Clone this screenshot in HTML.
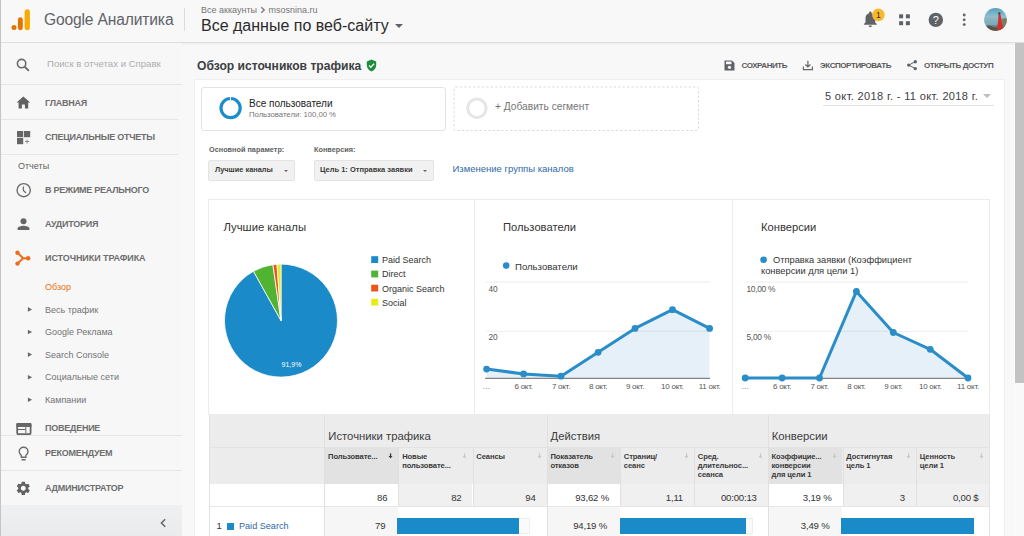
<!DOCTYPE html>
<html><head><meta charset="utf-8">
<style>
*{margin:0;padding:0;box-sizing:border-box}
html,body{width:1024px;height:536px;overflow:hidden}
body{background:#f8f8f8;font-family:"Liberation Sans",sans-serif;color:#3c4043;position:relative}
.a{position:absolute;white-space:nowrap}
.t{position:absolute;white-space:nowrap;line-height:1}
#hdr{position:absolute;left:0;top:0;width:1024px;height:43px;background:#f8f8f8;border-bottom:1px solid #dedede;box-shadow:0 1px 2px rgba(0,0,0,0.06)}
#lb{position:absolute;left:0;top:0;width:1px;height:536px;background:#c4c4c4}
#side{position:absolute;left:1px;top:43px;width:181px;height:493px;background:#f7f7f8}
.hr{position:absolute;height:1px;background:#e5e6e8}
.mi{position:absolute;left:45px;font-size:9px;font-weight:700;color:#6e6e6e;margin-top:0.4px;letter-spacing:-0.25px;line-height:1}
.si{position:absolute;left:45px;font-size:9px;color:#737373;line-height:1}
.tri{position:absolute;left:28px;width:0;height:0;border-left:4px solid #6a6a6a;border-top:2.3px solid transparent;border-bottom:2.3px solid transparent;margin-top:0.5px}
#panel{position:absolute;left:194px;top:79px;width:811px;height:460px;background:#fff;border:1px solid #efefef}
.tb{position:absolute;font-size:8px;font-weight:700;color:#585858;line-height:1;letter-spacing:-0.42px}
</style></head>
<body>
<div id="hdr"></div>
<div id="lb"></div>
<!-- logo -->
<svg class="a" style="left:0;top:0" width="40" height="40">
  <circle cx="14" cy="27.6" r="2.5" fill="#e37400"/>
  <rect x="17.9" y="17.2" width="4.9" height="13" rx="2.45" fill="#e37400"/>
  <rect x="24.6" y="9.3" width="5.3" height="20.9" rx="2.65" fill="#f9ab00"/>
</svg>
<div class="t" style="left:44px;top:12.3px;font-size:15.6px;letter-spacing:-0.15px;color:#5f6368">Google Аналитика</div>
<div class="a" style="left:184px;top:8px;width:1px;height:23px;background:#dadce0"></div>
<div class="t" style="left:201px;top:6px;font-size:9px;color:#757575">Все аккаунты</div>
<svg class="a" style="left:260px;top:6px" width="6" height="8" viewBox="0 0 6 8"><path d="M1.3 1.3 L4.2 4 L1.3 6.7" fill="none" stroke="#757575" stroke-width="1.3"/></svg>
<div class="t" style="left:268.6px;top:6.2px;font-size:9px;color:#757575">msosnina.ru</div>
<div class="t" style="left:201px;top:18.3px;font-size:16px;color:#2b2b2b">Все данные по веб-сайту</div>
<div class="a" style="left:395px;top:24px;width:0;height:0;border-left:4px solid transparent;border-right:4px solid transparent;border-top:4px solid #5f6368"></div>

<!-- header right icons -->
<svg class="a" style="left:860px;top:6px" width="160" height="30" viewBox="860 6 160 30">
  <path d="M870.3 27.2c.9 0 1.6-.7 1.6-1.6h-3.2c0 .9.7 1.6 1.6 1.6zm4.9-4.8v-4c0-2.5-1.3-4.5-3.6-5.1v-.6c0-.7-.6-1.2-1.3-1.2s-1.2.5-1.2 1.2v.6c-2.3.5-3.6 2.6-3.6 5.1v4l-1.6 1.6v.8h12.9v-.8l-1.6-1.6z" fill="#5f6368"/>
  <circle cx="878.4" cy="14.9" r="6.3" fill="#f9b92f"/>
  <text x="878.3" y="18" font-size="8.6" font-family="Liberation Sans" fill="#333" text-anchor="middle">1</text>
  <rect x="899.1" y="14.3" width="4" height="4" fill="#5f6368"/><rect x="905.9" y="14.3" width="4" height="4" fill="#5f6368"/>
  <rect x="899.1" y="21.2" width="4" height="4" fill="#5f6368"/><rect x="905.9" y="21.2" width="4" height="4" fill="#5f6368"/>
  <circle cx="935.8" cy="19.9" r="7.2" fill="#5f6368"/>
  <text x="935.8" y="23.7" font-size="11" font-family="Liberation Sans" fill="#fff" text-anchor="middle">?</text>
  <circle cx="964.2" cy="15" r="1.4" fill="#5f6368"/><circle cx="964.2" cy="19.8" r="1.4" fill="#5f6368"/><circle cx="964.2" cy="24.6" r="1.4" fill="#5f6368"/>
  <defs><clipPath id="av"><circle cx="995.5" cy="19.4" r="11.3"/></clipPath>
  <linearGradient id="sky" x1="0" y1="0" x2="0" y2="1"><stop offset="0" stop-color="#4d9ec0"/><stop offset="0.4" stop-color="#94bfcc"/><stop offset="0.7" stop-color="#5f98ad"/><stop offset="1" stop-color="#5d5348"/></linearGradient></defs>
  <g clip-path="url(#av)">
    <rect x="983" y="7" width="25" height="25" fill="url(#sky)"/>
    <path d="M983 19 L990 17 L999 19 L1008 18 L1008 25 L983 25Z" fill="#8fb4c0" opacity="0.6"/>
    <path d="M983 27 L989 25.5 L995 27.5 L1008 25 L1008 32 L983 32Z" fill="#5e5248"/>
    <path d="M1002 19 L1006 18 L1008 21 L1008 30 L1003 30Z" fill="#7d7a5c"/>
    <ellipse cx="999.4" cy="13.6" rx="1.2" ry="1.4" fill="#5a3a30"/>
    <path d="M998.4 15 L1000.6 15 L1001.6 20 L1003.4 29.5 L996.6 29.5 L998.2 21 Z" fill="#d2302a"/>
  </g>
</svg>

<!-- sidebar -->
<div id="side"></div>
<svg class="a" style="left:15px;top:57px" width="16" height="16" viewBox="0 0 16 16">
  <circle cx="6.6" cy="6.6" r="4.2" fill="none" stroke="#6b6b6b" stroke-width="1.6"/>
  <line x1="9.6" y1="9.6" x2="13.9" y2="13.9" stroke="#6b6b6b" stroke-width="1.9"/>
</svg>
<div class="t" style="left:47px;top:59.2px;width:114px;overflow:hidden;font-size:9.6px;color:#adadad">Поиск в отчетах и Справке</div>
<div class="hr" style="left:1px;top:84px;width:181px"></div>
<svg class="a" style="left:16px;top:96px" width="15" height="13" viewBox="0 0 15 13">
  <path d="M7.3 0.5 L0.6 6.6 H2.6 V12.5 H5.9 V8.5 H8.9 V12.5 H12.2 V6.6 H14.2 Z" fill="#616161"/>
</svg>
<div class="mi" style="top:98.5px">ГЛАВНАЯ</div>
<div class="hr" style="left:1px;top:119px;width:177px"></div>
<svg class="a" style="left:16px;top:130px" width="15" height="15" viewBox="0 0 15 15">
  <rect x="1" y="1" width="6.2" height="6.2" fill="#666"/><rect x="8" y="1" width="6.2" height="6.2" fill="#666"/>
  <rect x="1" y="8" width="6.2" height="6.2" fill="#666"/>
  <path d="M10.6 9.6h.9v1.5h1.5v.9h-1.5v1.5h-.9v-1.5h-1.5v-.9h1.5z" fill="#888"/>
</svg>
<div class="mi" style="top:133px">СПЕЦИАЛЬНЫЕ ОТЧЕТЫ</div>
<div class="hr" style="left:1px;top:154px;width:177px"></div>
<div class="t" style="left:18px;top:161.5px;font-size:9px;color:#616161">Отчеты</div>
<svg class="a" style="left:15px;top:182px" width="17" height="17" viewBox="0 0 17 17">
  <circle cx="8.7" cy="8.2" r="6.6" fill="none" stroke="#6b6b6b" stroke-width="1.4"/>
  <path d="M8.4 4.5 V8.5 L11 10.9" fill="none" stroke="#6b6b6b" stroke-width="1.3"/>
</svg>
<div class="mi" style="top:185.5px">В РЕЖИМЕ РЕАЛЬНОГО</div>
<svg class="a" style="left:16px;top:217px" width="15" height="15" viewBox="0 0 15 15">
  <circle cx="7.5" cy="4.3" r="3" fill="#666"/>
  <path d="M1.6 13 V11.6 C1.6 9.6 5.4 8.7 7.5 8.7 C9.6 8.7 13.4 9.6 13.4 11.6 V13 Z" fill="#666"/>
</svg>
<div class="mi" style="top:219.5px">АУДИТОРИЯ</div>
<svg class="a" style="left:15px;top:249px" width="17" height="17" viewBox="0 0 17 17">
  <path d="M2.5 3.7 L8.2 9.2 L2.5 14.6 M8.2 9.2 H13.1" fill="none" stroke="#ed6c1d" stroke-width="2"/>
  <circle cx="2.5" cy="3.7" r="2.2" fill="#ed6c1d"/><circle cx="2.5" cy="14.6" r="2.2" fill="#ed6c1d"/><circle cx="13.1" cy="9.2" r="2.3" fill="#ed6c1d"/>
</svg>
<div class="mi" style="top:254px;letter-spacing:-0.08px">ИСТОЧНИКИ ТРАФИКА</div>
<div class="si" style="top:282.5px;color:#e8710a">Обзор</div>
<svg class="a" style="left:0;top:0" width="40" height="420" viewBox="0 0 40 420"><path d="M27.9 307.1 L32.1 309.4 L27.9 311.7 Z" fill="#6a6a6a"/><path d="M27.9 329.7 L32.1 332.0 L27.9 334.3 Z" fill="#6a6a6a"/><path d="M27.9 352.3 L32.1 354.6 L27.9 356.9 Z" fill="#6a6a6a"/><path d="M27.9 374.9 L32.1 377.2 L27.9 379.5 Z" fill="#6a6a6a"/><path d="M27.9 397.5 L32.1 399.8 L27.9 402.1 Z" fill="#6a6a6a"/></svg>
<div class="si" style="top:305.5px">Весь трафик</div>
<div class="si" style="top:327.5px">Google Реклама</div>
<div class="si" style="top:351.3px">Search Console</div>
<div class="si" style="top:373.3px">Социальные сети</div>
<div class="si" style="top:395.5px">Кампании</div>
<svg class="a" style="left:16px;top:422px" width="16" height="13" viewBox="0 0 16 13">
  <rect x="1.2" y="1.8" width="13.4" height="10.4" rx="1.2" fill="none" stroke="#666" stroke-width="1.8"/>
  <rect x="0.3" y="0.9" width="15.2" height="4" rx="1" fill="#666"/>
  <line x1="1.5" y1="7.5" x2="9.8" y2="7.5" stroke="#666" stroke-width="1.1"/>
  <line x1="9.8" y1="4.5" x2="9.8" y2="11.5" stroke="#777" stroke-width="1.1"/>
</svg>
<div class="mi" style="top:423.7px">ПОВЕДЕНИЕ</div>
<div class="hr" style="left:1px;top:435px;width:181px"></div>
<svg class="a" style="left:17px;top:446px" width="13" height="16" viewBox="0 0 13 16">
  <path d="M6.6 1.3 C4.1 1.3 2.2 3.2 2.2 5.6 C2.2 7.2 3 8.5 4.3 9.3 V11.2 H8.9 V9.3 C10.2 8.5 11 7.2 11 5.6 C11 3.2 9.1 1.3 6.6 1.3Z" fill="none" stroke="#6b6b6b" stroke-width="1.4"/>
  <rect x="4.5" y="13" width="4.2" height="1.5" fill="#6b6b6b"/>
</svg>
<div class="mi" style="top:448.5px">РЕКОМЕНДУЕМ</div>
<div class="hr" style="left:1px;top:470px;width:181px"></div>
<svg class="a" style="left:14.6px;top:480.3px" width="16.6" height="16.6" viewBox="0 0 24 24">
  <path fill="#616161" d="M19.14 12.94c.04-.3.06-.61.06-.94 0-.32-.02-.64-.07-.94l2.03-1.58a.49.49 0 0 0 .12-.61l-1.92-3.32a.488.488 0 0 0-.59-.22l-2.39.96c-.5-.38-1.03-.7-1.62-.94l-.36-2.54a.484.484 0 0 0-.48-.41h-3.84c-.24 0-.43.17-.47.41l-.36 2.54c-.59.24-1.13.57-1.62.94l-2.39-.96c-.22-.08-.47 0-.59.22L2.74 8.87c-.12.21-.08.47.12.61l2.03 1.58c-.05.3-.09.63-.09.94s.02.64.07.94l-2.03 1.58a.49.49 0 0 0-.12.61l1.92 3.32c.12.22.37.29.59.22l2.39-.96c.5.38 1.03.7 1.62.94l.36 2.54c.05.24.24.41.48.41h3.84c.24 0 .44-.17.47-.41l.36-2.54c.59-.24 1.13-.56 1.62-.94l2.39.96c.22.08.47 0 .59-.22l1.92-3.32c.12-.22.07-.47-.12-.61l-2.01-1.58zM12 15.6c-1.98 0-3.6-1.62-3.6-3.6s1.62-3.6 3.6-3.6 3.6 1.62 3.6 3.6-1.62 3.6-3.6 3.6z"/>
</svg>
<div class="mi" style="top:484px">АДМИНИСТРАТОР</div>
<div class="a" style="left:1px;top:505px;width:181px;height:31px;background:linear-gradient(#eef0f2,#e9ebed)"></div>
<svg class="a" style="left:158px;top:517px" width="10" height="12" viewBox="0 0 10 12"><path d="M7.2 2.2 L3.4 6 L7.2 9.8" fill="none" stroke="#666" stroke-width="1.5"/></svg>

<!-- scrollbar -->
<div class="a" style="left:1014px;top:43px;width:10px;height:493px;background:#f9f9f9;border-left:1px solid #fdfdfd"></div>
<div class="a" style="left:1015px;top:43px;width:9px;height:340px;background:#c3c3c3"></div>

<!-- title & toolbar -->
<div class="t" style="left:197px;top:60px;font-size:12.1px;font-weight:700;color:#3c4043">Обзор источников трафика</div>
<svg class="a" style="left:366px;top:59px" width="11" height="13" viewBox="0 0 11 13">
  <path d="M5.5 0.5 L0.8 2.4 V6 C0.8 9 2.8 11.7 5.5 12.5 C8.2 11.7 10.2 9 10.2 6 V2.4 Z" fill="#1e8e3e"/>
  <path d="M3 6.4 L4.8 8.2 L8.1 4.8" fill="none" stroke="#fff" stroke-width="1.3"/>
</svg>
<svg class="a" style="left:724px;top:60px" width="11" height="11" viewBox="0 0 11 11">
  <path d="M0.5 0.5 H8 L10.5 3 V10.5 H0.5 Z" fill="#5f6368"/>
  <rect x="2" y="1.6" width="5.5" height="2.6" fill="#f8f8f8"/>
  <circle cx="5.5" cy="7.3" r="1.6" fill="#f8f8f8"/>
</svg>
<div class="tb" style="left:741.5px;top:61.5px">СОХРАНИТЬ</div>
<svg class="a" style="left:802px;top:60px" width="12" height="11" viewBox="0 0 12 11">
  <path d="M5.9 0.8 V6.8 M3.4 4.5 L5.9 7 L8.4 4.5 M1.4 6.5 V9.6 H10.4 V6.5" fill="none" stroke="#666" stroke-width="1.2"/>
</svg>
<div class="tb" style="left:820px;top:61.5px">ЭКСПОРТИРОВАТЬ</div>
<svg class="a" style="left:906px;top:59px" width="12" height="12" viewBox="0 0 12 12">
  <circle cx="9.3" cy="2.7" r="1.7" fill="#5f6368"/><circle cx="2.7" cy="6.1" r="1.7" fill="#5f6368"/><circle cx="9.3" cy="9.6" r="1.7" fill="#5f6368"/>
  <path d="M9.3 2.7 L2.7 6.1 L9.3 9.6" fill="none" stroke="#5f6368" stroke-width="1"/>
</svg>
<div class="tb" style="left:924px;top:61.5px">ОТКРЫТЬ ДОСТУП</div>

<!-- panel -->
<div id="panel"></div>
<div class="a" style="left:201px;top:87px;width:245px;height:44px;border:1px solid #e3e3e3;border-radius:3px;background:#fff"></div>
<svg class="a" style="left:218px;top:96px" width="26" height="26" viewBox="0 0 26 26">
  <circle cx="12.6" cy="12.1" r="9.6" fill="none" stroke="#1d8ccb" stroke-width="3.2"/>
  <rect x="12.1" y="0" width="0.9" height="5" fill="#fff"/>
</svg>
<div class="t" style="left:249px;top:98.8px;font-size:10px;color:#202124">Все пользователи</div>
<div class="t" style="left:249px;top:110.6px;font-size:7.7px;color:#757575">Пользователи: 100,00 %</div>
<svg class="a" style="left:453px;top:86px" width="247" height="46"><rect x="1" y="1" width="244.5" height="43.5" rx="1.5" fill="none" stroke="#d9d9d9" stroke-width="1" stroke-dasharray="2.2,2.2"/></svg>
<svg class="a" style="left:464px;top:96px" width="26" height="26" viewBox="0 0 26 26">
  <circle cx="12.9" cy="12.2" r="9.2" fill="none" stroke="#e6e6e6" stroke-width="3"/>
</svg>
<div class="t" style="left:495px;top:101.5px;font-size:10.2px;color:#757575">+ Добавить сегмент</div>
<div class="t" style="left:825px;top:91.3px;font-size:11px;letter-spacing:0.35px;color:#3c4043">5 окт. 2018 г. - 11 окт. 2018 г.</div>
<div class="a" style="left:983px;top:94px;width:0;height:0;border-left:4.5px solid transparent;border-right:4.5px solid transparent;border-top:4.5px solid #bdbdbd"></div>
<div class="a" style="left:823px;top:104.5px;width:171px;height:1px;background:#e0e0e0"></div>

<div class="tb" style="left:209px;top:145.5px;font-size:7.3px;letter-spacing:0;color:#616161">Основной параметр:</div>
<div class="a" style="left:208px;top:160px;width:87px;height:21px;background:#f1f1f1;border:1px solid #e3e3e3;border-radius:2px"></div>
<div class="tb" style="left:215px;top:166.4px;font-size:7.4px;letter-spacing:0;color:#3a3a3a">Лучшие каналы</div>
<div class="a" style="left:283.6px;top:169.8px;width:0;height:0;border-left:2.6px solid transparent;border-right:2.6px solid transparent;border-top:2.8px solid #666"></div>
<div class="tb" style="left:314px;top:145.5px;font-size:7.3px;letter-spacing:0;color:#616161">Конверсия:</div>
<div class="a" style="left:314px;top:160px;width:120px;height:21px;background:#f1f1f1;border:1px solid #e3e3e3;border-radius:2px"></div>
<div class="tb" style="left:320px;top:166.4px;font-size:7.5px;letter-spacing:0;color:#3a3a3a">Цель 1: Отправка заявки</div>
<div class="a" style="left:422.8px;top:169.8px;width:0;height:0;border-left:2.6px solid transparent;border-right:2.6px solid transparent;border-top:2.8px solid #666"></div>
<div class="t" style="left:452.5px;top:164.2px;font-size:9.5px;color:#2f69a8">Изменение группы каналов</div>

<!-- charts -->
<div class="a" style="left:208px;top:199px;width:782px;height:216px;border:1px solid #ececec;background:#fff"></div>
<div class="a" style="left:474px;top:200px;width:1px;height:214px;background:#ececec"></div>
<div class="a" style="left:732px;top:200px;width:1px;height:214px;background:#ececec"></div>
<div class="t" style="left:223.5px;top:222.3px;font-size:11.3px;color:#333">Лучшие каналы</div>
<div class="t" style="left:503px;top:222.2px;font-size:11.2px;color:#333">Пользователи</div>
<div class="t" style="left:761px;top:222.2px;font-size:11.2px;color:#333">Конверсии</div>

<svg class="a" style="left:0;top:0;overflow:visible" width="1024" height="536" viewBox="0 0 1024 536">
  <g stroke="#fff" stroke-width="0.8">
  <path d="M281,320.6 L281.00,264.10 A56.5,56.5 0 1 1 253.47,271.26 Z" fill="#1a8bc8"/>
  <path d="M281,320.6 L253.47,271.26 A56.5,56.5 0 0 1 272.91,264.68 Z" fill="#50b432"/>
  <path d="M281,320.6 L272.91,264.68 A56.5,56.5 0 0 1 277.01,264.24 Z" fill="#ed561b"/>
  <path d="M281,320.6 L277.01,264.24 A56.5,56.5 0 0 1 281.00,264.10 Z" fill="#e8ea1a"/>
  </g>
  <text x="291.5" y="366.5" font-size="7" font-family="Liberation Sans" fill="#fff" text-anchor="middle">91,9%</text>
  <!-- users chart -->
    <path d="M486.6,369.1 L523.6,373.9 L561,376.2 L598.1,352.3 L635,328.4 L672.5,309.7 L709.6,328.4 L709.6,378 L486.6,378 Z" fill="#e6f0f8"/>
  <line x1="486" y1="282" x2="710" y2="282" stroke="#000" stroke-opacity="0.07" stroke-width="1"/>
  <line x1="486" y1="331.3" x2="710" y2="331.3" stroke="#000" stroke-opacity="0.07" stroke-width="1"/>
  <line x1="485" y1="378.3" x2="710" y2="378.3" stroke="#666" stroke-width="1"/>
  <polyline points="486.6,369.1 523.6,373.9 561,376.2 598.1,352.3 635,328.4 672.5,309.7 709.6,328.4" fill="none" stroke="#2a8dc8" stroke-width="3" stroke-linejoin="round"/>
  <g fill="#2a8dc8">
  <circle cx="486.6" cy="369.1" r="3.4"/><circle cx="523.6" cy="373.9" r="3.4"/><circle cx="561" cy="376.2" r="3.4"/><circle cx="598.1" cy="352.3" r="3.4"/><circle cx="635" cy="328.4" r="3.4"/><circle cx="672.5" cy="309.7" r="3.4"/><circle cx="709.6" cy="328.4" r="3.4"/>
  </g>
  <circle cx="506.2" cy="265.6" r="3.3" fill="#2a8dc8"/>
  <!-- conversions chart -->
    <path d="M745.2,378 L782.1,378 L819.5,378 L856.4,291.4 L893.3,332.5 L930.2,349.3 L968,378 Z" fill="#e6f0f8"/>
  <line x1="745" y1="282" x2="968" y2="282" stroke="#000" stroke-opacity="0.07" stroke-width="1"/>
  <line x1="745" y1="331.3" x2="968" y2="331.3" stroke="#000" stroke-opacity="0.07" stroke-width="1"/>
  <line x1="744" y1="378.3" x2="969" y2="378.3" stroke="#666" stroke-width="1"/>
  <polyline points="745.2,378 782.1,378 819.5,378 856.4,291.4 893.3,332.5 930.2,349.3 968,378" fill="none" stroke="#2a8dc8" stroke-width="3" stroke-linejoin="round"/>
  <g fill="#2a8dc8">
  <circle cx="745.2" cy="378" r="3.4"/><circle cx="782.1" cy="378" r="3.4"/><circle cx="819.5" cy="378" r="3.4"/><circle cx="856.4" cy="291.4" r="3.4"/><circle cx="893.3" cy="332.5" r="3.4"/><circle cx="930.2" cy="349.3" r="3.4"/><circle cx="968" cy="378" r="3.4"/>
  </g>
  <circle cx="763.6" cy="259.8" r="3.3" fill="#2a8dc8"/>
  <!-- legend squares -->
  <rect x="371.2" y="256.2" width="7" height="6.8" fill="#1a8bc8"/>
  <rect x="371.2" y="270.6" width="7" height="6.8" fill="#50b432"/>
  <rect x="371.2" y="284.7" width="7" height="6.8" fill="#ed561b"/>
  <rect x="371.2" y="298.8" width="7" height="6.8" fill="#e8ea1a"/>
</svg>
<div class="t" style="left:382px;top:255.8px;font-size:9px;color:#333">Paid Search</div>
<div class="t" style="left:382px;top:270.3px;font-size:9px;color:#333">Direct</div>
<div class="t" style="left:382px;top:284.8px;font-size:9px;color:#333">Organic Search</div>
<div class="t" style="left:382px;top:298.8px;font-size:9px;color:#333">Social</div>
<div class="t" style="left:515px;top:261.5px;font-size:9.6px;color:#333">Пользователи</div>
<div class="t" style="left:773px;top:256.2px;font-size:9.3px;color:#333">Отправка заявки (Коэффициент</div>
<div class="t" style="left:761px;top:266.6px;font-size:9.3px;color:#333">конверсии для цели 1)</div>
<div class="t" style="left:488.5px;top:284.6px;font-size:8.3px;letter-spacing:-0.2px;color:#555">40</div>
<div class="t" style="left:488.5px;top:333.3px;font-size:8.3px;letter-spacing:-0.2px;color:#555">20</div>
<div class="t" style="left:746.5px;top:284.7px;font-size:8.4px;letter-spacing:-0.3px;color:#555">10,00 %</div>
<div class="t" style="left:746.5px;top:333.3px;font-size:8.4px;letter-spacing:-0.3px;color:#555">5,00 %</div>
<div class="t" style="left:482.6px;top:382.6px;font-size:8px;letter-spacing:-0.25px;color:#555">…</div>
<div class="t" style="left:493.6px;width:60px;text-align:center;top:382.6px;font-size:8px;letter-spacing:-0.25px;color:#555">6 окт.</div>
<div class="t" style="left:531px;width:60px;text-align:center;top:382.6px;font-size:8px;letter-spacing:-0.25px;color:#555">7 окт.</div>
<div class="t" style="left:568.1px;width:60px;text-align:center;top:382.6px;font-size:8px;letter-spacing:-0.25px;color:#555">8 окт.</div>
<div class="t" style="left:605px;width:60px;text-align:center;top:382.6px;font-size:8px;letter-spacing:-0.25px;color:#555">9 окт.</div>
<div class="t" style="left:642.3px;width:60px;text-align:center;top:382.6px;font-size:8px;letter-spacing:-0.25px;color:#555">10 окт.</div>
<div class="t" style="left:679.6px;width:60px;text-align:center;top:382.6px;font-size:8px;letter-spacing:-0.25px;color:#555">11 окт.</div>
<div class="t" style="left:741.2px;top:382.6px;font-size:8px;letter-spacing:-0.25px;color:#555">…</div>
<div class="t" style="left:752.1px;width:60px;text-align:center;top:382.6px;font-size:8px;letter-spacing:-0.25px;color:#555">6 окт.</div>
<div class="t" style="left:789.5px;width:60px;text-align:center;top:382.6px;font-size:8px;letter-spacing:-0.25px;color:#555">7 окт.</div>
<div class="t" style="left:826.4px;width:60px;text-align:center;top:382.6px;font-size:8px;letter-spacing:-0.25px;color:#555">8 окт.</div>
<div class="t" style="left:863.3px;width:60px;text-align:center;top:382.6px;font-size:8px;letter-spacing:-0.25px;color:#555">9 окт.</div>
<div class="t" style="left:900.2px;width:60px;text-align:center;top:382.6px;font-size:8px;letter-spacing:-0.25px;color:#555">10 окт.</div>
<div class="t" style="left:938px;width:60px;text-align:center;top:382.6px;font-size:8px;letter-spacing:-0.25px;color:#555">11 окт.</div>
<!-- table -->
<div class="a" style="left:208.5px;top:414.7px;width:780.9px;height:69.1px;background:#ececec"></div>
<div class="a" style="left:324.3px;top:447.2px;width:74.09999999999997px;height:36.6px;background:#e2e2e2"></div>
<div class="a" style="left:546.6px;top:447.2px;width:73.39999999999998px;height:36.6px;background:#e2e2e2"></div>
<div class="a" style="left:767.7px;top:447.2px;width:74.79999999999995px;height:36.6px;background:#e2e2e2"></div>
<div class="a" style="left:208.5px;top:483.8px;width:780.9px;height:22.4px;background:#fff"></div>
<div class="a" style="left:398.4px;top:483.8px;width:74.10000000000002px;height:22.4px;background:#f0f0f0"></div>
<div class="a" style="left:472.5px;top:483.8px;width:74.10000000000002px;height:22.4px;background:#f0f0f0"></div>
<div class="a" style="left:620px;top:483.8px;width:74px;height:22.4px;background:#f0f0f0"></div>
<div class="a" style="left:694px;top:483.8px;width:73.70000000000005px;height:22.4px;background:#f0f0f0"></div>
<div class="a" style="left:842.5px;top:483.8px;width:73.5px;height:22.4px;background:#f0f0f0"></div>
<div class="a" style="left:916px;top:483.8px;width:73.39999999999998px;height:22.4px;background:#f0f0f0"></div>
<div class="a" style="left:208.5px;top:506.2px;width:780.9px;height:29.80000000000001px;background:#fff"></div>
<div class="a" style="left:324.3px;top:506.2px;width:74.09999999999997px;height:29.80000000000001px;background:#f6f6f6"></div>
<div class="a" style="left:546.6px;top:506.2px;width:73.39999999999998px;height:29.80000000000001px;background:#f6f6f6"></div>
<div class="a" style="left:767.7px;top:506.2px;width:74.79999999999995px;height:29.80000000000001px;background:#f6f6f6"></div>
<div class="a" style="left:208.5px;top:447.2px;width:780.9px;height:1px;background:#e3e3e3"></div>
<div class="a" style="left:208.5px;top:506.2px;width:780.9px;height:1px;background:#e6e6e6"></div>
<div class="a" style="left:324.3px;top:414.7px;width:1px;height:121.30000000000001px;background:#e0e0e0"></div>
<div class="a" style="left:398.4px;top:447.2px;width:1px;height:59.0px;background:#e0e0e0"></div>
<div class="a" style="left:472.5px;top:447.2px;width:1px;height:59.0px;background:#e0e0e0"></div>
<div class="a" style="left:546.6px;top:414.7px;width:1px;height:121.30000000000001px;background:#e0e0e0"></div>
<div class="a" style="left:620px;top:447.2px;width:1px;height:59.0px;background:#e0e0e0"></div>
<div class="a" style="left:694px;top:447.2px;width:1px;height:59.0px;background:#e0e0e0"></div>
<div class="a" style="left:767.7px;top:414.7px;width:1px;height:121.30000000000001px;background:#e0e0e0"></div>
<div class="a" style="left:842.5px;top:447.2px;width:1px;height:59.0px;background:#e0e0e0"></div>
<div class="a" style="left:916px;top:447.2px;width:1px;height:59.0px;background:#e0e0e0"></div>
<div class="a" style="left:208.5px;top:414.7px;width:1px;height:121.30000000000001px;background:#e3e3e3"></div>
<div class="a" style="left:989.4px;top:414.7px;width:1px;height:121.30000000000001px;background:#e3e3e3"></div>
<div class="t" style="left:328.3px;top:430.5px;font-size:11.3px;color:#3c3c3c">Источники трафика</div>
<div class="t" style="left:550.6px;top:430.5px;font-size:11.3px;color:#3c3c3c">Действия</div>
<div class="t" style="left:771.7px;top:430.5px;font-size:11.3px;color:#3c3c3c">Конверсии</div>
<div class="a" style="left:328.1px;top:451.6px;font-size:7.6px;font-weight:700;color:#3a3a3a;line-height:9.2px;letter-spacing:-0.1px">Пользовате...</div>
<svg class="a" style="left:388.29999999999995px;top:452.5px" width="5" height="6" viewBox="0 0 5 6"><rect x="1.9" y="0.4" width="1.3" height="3.4" fill="#3a3a3a"/><path d="M0.5 3.1 H4.5 L2.5 5.6 Z" fill="#3a3a3a"/></svg>
<div class="a" style="left:402.2px;top:451.6px;font-size:7.6px;font-weight:700;color:#3a3a3a;line-height:9.2px;letter-spacing:-0.1px">Новые<br>пользовате...</div>
<svg class="a" style="left:462.4px;top:452.5px" width="5" height="6" viewBox="0 0 5 6"><rect x="1.9" y="0.4" width="1.3" height="3.4" fill="#c9c9c9"/><path d="M0.5 3.1 H4.5 L2.5 5.6 Z" fill="#c9c9c9"/></svg>
<div class="a" style="left:476.3px;top:451.6px;font-size:7.6px;font-weight:700;color:#3a3a3a;line-height:9.2px;letter-spacing:-0.1px">Сеансы</div>
<svg class="a" style="left:536.5px;top:452.5px" width="5" height="6" viewBox="0 0 5 6"><rect x="1.9" y="0.4" width="1.3" height="3.4" fill="#c9c9c9"/><path d="M0.5 3.1 H4.5 L2.5 5.6 Z" fill="#c9c9c9"/></svg>
<div class="a" style="left:550.4px;top:451.6px;font-size:7.6px;font-weight:700;color:#3a3a3a;line-height:9.2px;letter-spacing:-0.1px">Показатель<br>отказов</div>
<svg class="a" style="left:609.9px;top:452.5px" width="5" height="6" viewBox="0 0 5 6"><rect x="1.9" y="0.4" width="1.3" height="3.4" fill="#c9c9c9"/><path d="M0.5 3.1 H4.5 L2.5 5.6 Z" fill="#c9c9c9"/></svg>
<div class="a" style="left:623.8px;top:451.6px;font-size:7.6px;font-weight:700;color:#3a3a3a;line-height:9.2px;letter-spacing:-0.1px">Страниц/<br>сеанс</div>
<svg class="a" style="left:683.9px;top:452.5px" width="5" height="6" viewBox="0 0 5 6"><rect x="1.9" y="0.4" width="1.3" height="3.4" fill="#c9c9c9"/><path d="M0.5 3.1 H4.5 L2.5 5.6 Z" fill="#c9c9c9"/></svg>
<div class="a" style="left:697.8px;top:451.6px;font-size:7.6px;font-weight:700;color:#3a3a3a;line-height:9.2px;letter-spacing:-0.1px">Сред.<br>длительнос...<br>сеанса</div>
<svg class="a" style="left:757.6px;top:452.5px" width="5" height="6" viewBox="0 0 5 6"><rect x="1.9" y="0.4" width="1.3" height="3.4" fill="#c9c9c9"/><path d="M0.5 3.1 H4.5 L2.5 5.6 Z" fill="#c9c9c9"/></svg>
<div class="a" style="left:771.5px;top:451.6px;font-size:7.6px;font-weight:700;color:#3a3a3a;line-height:9.2px;letter-spacing:-0.1px">Коэффицие...<br>конверсии<br>для цели 1</div>
<svg class="a" style="left:832.4px;top:452.5px" width="5" height="6" viewBox="0 0 5 6"><rect x="1.9" y="0.4" width="1.3" height="3.4" fill="#c9c9c9"/><path d="M0.5 3.1 H4.5 L2.5 5.6 Z" fill="#c9c9c9"/></svg>
<div class="a" style="left:846.3px;top:451.6px;font-size:7.6px;font-weight:700;color:#3a3a3a;line-height:9.2px;letter-spacing:-0.1px">Достигнутая<br>цель 1</div>
<svg class="a" style="left:905.9px;top:452.5px" width="5" height="6" viewBox="0 0 5 6"><rect x="1.9" y="0.4" width="1.3" height="3.4" fill="#c9c9c9"/><path d="M0.5 3.1 H4.5 L2.5 5.6 Z" fill="#c9c9c9"/></svg>
<div class="a" style="left:919.8px;top:451.6px;font-size:7.6px;font-weight:700;color:#3a3a3a;line-height:9.2px;letter-spacing:-0.1px">Ценность<br>цели 1</div>
<svg class="a" style="left:979.3px;top:452.5px" width="5" height="6" viewBox="0 0 5 6"><rect x="1.9" y="0.4" width="1.3" height="3.4" fill="#c9c9c9"/><path d="M0.5 3.1 H4.5 L2.5 5.6 Z" fill="#c9c9c9"/></svg>
<div class="t" style="left:324.3px;width:63.099999999999966px;text-align:right;top:493px;font-size:9.6px;letter-spacing:-0.2px;color:#333">86</div>
<div class="t" style="left:398.4px;width:63.10000000000002px;text-align:right;top:493px;font-size:9.6px;letter-spacing:-0.2px;color:#333">82</div>
<div class="t" style="left:472.5px;width:63.10000000000002px;text-align:right;top:493px;font-size:9.6px;letter-spacing:-0.2px;color:#333">94</div>
<div class="t" style="left:546.6px;width:62.39999999999998px;text-align:right;top:493px;font-size:9.6px;letter-spacing:-0.2px;color:#333">93,62 %</div>
<div class="t" style="left:620px;width:63px;text-align:right;top:493px;font-size:9.6px;letter-spacing:-0.2px;color:#333">1,11</div>
<div class="t" style="left:694px;width:62.700000000000045px;text-align:right;top:493px;font-size:9.6px;letter-spacing:-0.2px;color:#333">00:00:13</div>
<div class="t" style="left:767.7px;width:63.799999999999955px;text-align:right;top:493px;font-size:9.6px;letter-spacing:-0.2px;color:#333">3,19 %</div>
<div class="t" style="left:842.5px;width:62.5px;text-align:right;top:493px;font-size:9.6px;letter-spacing:-0.2px;color:#333">3</div>
<div class="t" style="left:916px;width:62.39999999999998px;text-align:right;top:493px;font-size:9.6px;letter-spacing:-0.2px;color:#333">0,00 $</div>
<div class="t" style="left:216.5px;top:521px;font-size:9.5px;color:#333">1</div>
<div class="a" style="left:227px;top:523.3px;width:6.8px;height:6.8px;background:#1a8bc8"></div>
<div class="t" style="left:239px;top:522px;font-size:9.1px;color:#2f69a8">Paid Search</div>
<div class="t" style="left:324.3px;width:61.099999999999966px;text-align:right;top:521px;font-size:9.6px;letter-spacing:-0.2px;color:#333">79</div>
<div class="t" style="left:546.6px;width:60.39999999999998px;text-align:right;top:521px;font-size:9.6px;letter-spacing:-0.2px;color:#333">94,19 %</div>
<div class="t" style="left:767.7px;width:61.799999999999955px;text-align:right;top:521px;font-size:9.6px;letter-spacing:-0.2px;color:#333">3,49 %</div>
<div class="a" style="left:396.7px;top:518px;width:133.59999999999997px;height:16px;background:#fafafa;border:1px solid #eeeeee"></div>
<div class="a" style="left:396.7px;top:518px;width:122.50000000000006px;height:16px;background:#1a8bc8"></div>
<div class="a" style="left:620px;top:518px;width:133.39999999999998px;height:16px;background:#fafafa;border:1px solid #eeeeee"></div>
<div class="a" style="left:620px;top:518px;width:126.20000000000005px;height:16px;background:#1a8bc8"></div>
<div class="a" style="left:840.7px;top:518px;width:133.29999999999995px;height:16px;background:#fafafa;border:1px solid #eeeeee"></div>
<div class="a" style="left:840.7px;top:518px;width:133.29999999999995px;height:16px;background:#1a8bc8"></div>

</body></html>
